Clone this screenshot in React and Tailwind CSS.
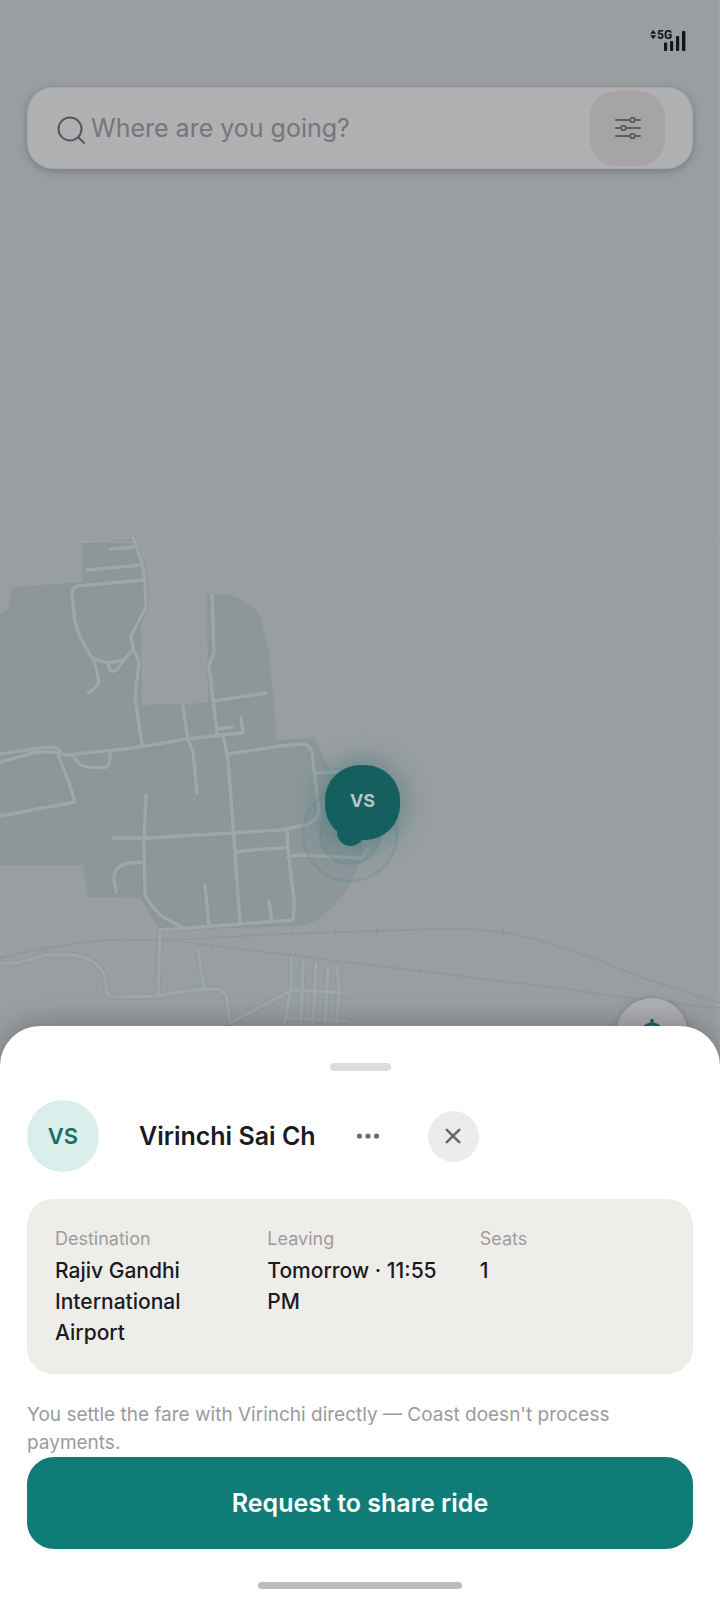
const roads = [
  'M133 537 L142 563 L145 582 L146 607 L131 636 L133 648 L139 662 L135 697 L142 745',
  'M110 549 L134 547',
  'M87 570 L142 565',
  'M144 580 L77 586 Q72 588 72 594 L75 622 Q80 640 92 658 L108 663 L123 660 L133 650',
  'M94 660 L99 682 Q96 689 88 693',
  'M108 663 L110 670 Q113 673 117 669 L124 660',
  'M212 595 L214 653 L209 665 L213 700 L217 734',
  'M213 701 L266 693',
  'M217 729 L232 727',
  'M217 735 L243 733 L241 717',
  'M0 754 L40 748 Q57 745 61 752',
  'M0 762 L33 753 Q50 750 67 755 L133 748 L187 739 L223 735',
  'M58 755 L68 780 L75 802 L0 816',
  'M72 755 L80 765 Q92 769 107 767 Q111 762 110 752',
  'M183 706 L188 740 L193 752 L197 793',
  'M223 735 L228 760 L233 825 L240 923',
  'M228 754 L280 746 L302 744 Q309 744 312 752 L319 811 Q318 820 306 825 L280 830 L233 833 L147 838 L113 838',
  'M146 795 L144 840 L145 893 Q146 900 160 915 Q168 920 182 927',
  'M144 862 L128 863 Q114 866 114 878 L116 892',
  'M236 852 L262 849 L287 848',
  'M287 829 L288 850 L294 900 Q294 914 293 920 L240 924 L160 930 L158 995',
  'M205 885 L209 925',
  'M269 901 L272 922',
  'M0 963 L17 963 Q40 956 48 955 L70 955 Q94 956 104 974 Q107 980 106 990 Q107 996 115 997 L160 996 Q190 989 215 989 Q226 990 227 1000 L230 1023',
  'M198 949 L204 987',
  'M230 1023 L292 990 L345 993',
  'M291 958 L291 989 L283 1028',
  'M303 960 L301 1028',
  'M316 963 L313 1028',
  'M328 965 L325 1028',
  'M337 967 L339 993 L336 1028',
  'M286 1018 L347 1021',
  'M317 773 L362 770',
  'M288 857 L300 855 L362 858 L369 847',
]

const rails = [
  'M0 958 Q60 944 107 940 L170 940 L280 934 L345 932 L435 929 Q490 927 530 938 T600 961 L640 977 L680 990 L720 1003',
  'M170 940 L240 949 L300 956 L345 962 L420 971 L475 978 L560 988 L600 994 L687 1005 L720 1008',
]

const trip = [
  { label: 'Destination', value: 'Rajiv Gandhi International Airport' },
  { label: 'Leaving', value: 'Tomorrow · 11:55 PM' },
  { label: 'Seats', value: '1' },
]

function MapCanvas() {
  return (
    <div className="absolute inset-0 overflow-hidden">
      <svg
        className="w-full h-full"
        viewBox="0 0 720 1600"
        preserveAspectRatio="xMidYMin slice"
        fill="none"
        aria-hidden="true"
      >
        <path
          fill="#8d9799"
          d="M0 613 L8 609 L12 587 L82 582 L82 543 L133 539 L142 563 L147 582 L148 607 L141 625 L142 705 L208 703 L207 595 L228 594 Q245 600 258 612 Q268 640 270 660 L277 740 L315 737 Q322 760 345 790 Q368 820 361 857 Q354 888 325 914 Q312 925 300 926 L160 930 L140 898 L87 897 L83 865 L0 865 Z"
        />
        <path stroke="#a0a6a8" strokeWidth="1" d="M0 542 H720 M719 0 V1600" />
        {rails.map((d) => (
          <g key={d}>
            <path d={d} stroke="#8f9799" strokeWidth="1.5" />
            <path d={d} stroke="#8f9799" strokeWidth="6" strokeDasharray="1.5 40.5" />
          </g>
        ))}
        <g strokeLinecap="round" strokeLinejoin="round">
          {roads.map((d) => (
            <path key={d} d={d} stroke="#8b9698" strokeWidth="6" strokeOpacity="0.5" />
          ))}
          {roads.map((d) => (
            <path key={d} d={d} stroke="#9da6a8" strokeWidth="3.4" />
          ))}
        </g>
        <g stroke="#668b8e" strokeOpacity="0.3" strokeWidth="3" fill="#4d8285">
          <circle cx="350" cy="834" r="47" fillOpacity="0.04" />
          <circle cx="350" cy="834" r="30" fillOpacity="0.12" />
        </g>
      </svg>

      {/* Rider pin */}
      <button
        type="button"
        className="absolute left-[325px] top-[765px] w-[75px] h-[75px] rounded-[35px] bg-[#155f5e] text-[#b7c6c7] text-[18px] leading-6 font-bold flex items-center justify-center pb-1 shadow-[0_0_28px_4px_rgba(21,95,94,0.4)]"
      >
        VS
        <span className="absolute left-3 -bottom-1.5 w-[27px] h-[27px] rounded-full bg-[#155f5e]" />
      </button>
    </div>
  )
}

function StatusBar() {
  return (
    <div className="flex justify-end pt-7 pr-[34px]">
      <svg className="w-9 h-6" viewBox="0 0 36 24" fill="#11171a" role="img" aria-label="5G signal">
        <path d="M3.2 2 L6.2 5.8 H0.2 Z M3.2 11 L6.2 7.2 H0.2 Z" />
        <text x="7" y="11" fontSize="12" fontWeight="800" fontFamily="Roboto, sans-serif">5G</text>
        <rect x="14" y="14.5" width="3.2" height="8.5" rx="0.8" />
        <rect x="20" y="13" width="3.2" height="10" rx="0.8" />
        <rect x="26" y="8" width="3.2" height="15" rx="0.8" />
        <rect x="32" y="3" width="3.4" height="20" rx="0.8" />
      </svg>
    </div>
  )
}

function SearchBar() {
  return (
    <div className="mx-[27px] mt-[35px] h-[82px] px-[27px] flex items-center rounded-[26px] border border-[#a8a8ab] bg-[#b0afb2] shadow-[0_2px_8px_rgba(60,70,75,0.4)]">
      <svg className="w-8 h-8 shrink-0" viewBox="0 0 32 32" fill="none" stroke="#56585c" strokeWidth="2" strokeLinecap="round" aria-hidden="true">
        <circle cx="15" cy="17" r="11.5" />
        <path d="M23.5 25.5 L29 31" />
      </svg>
      <input
        type="text"
        aria-label="Where are you going?"
        placeholder="Where are you going?"
        className="flex-1 min-w-0 pl-1 bg-transparent text-[25px] leading-8 text-[#333] placeholder:text-[#76767a] outline-none"
      />
      <button
        type="button"
        aria-label="Filters"
        className="w-[75px] h-[75px] shrink-0 rounded-[26px] bg-[#a7a4a5] flex items-center justify-center"
      >
        <svg className="w-[26px] h-6" viewBox="0 0 26 24" fill="none" stroke="#5c5b5e" strokeWidth="1.8" strokeLinecap="round" aria-hidden="true">
          <path d="M1 4 H15 M20 4 H25 M1 12 H6 M11 12 H25 M1 20 H15 M20 20 H25" />
          <circle cx="17.5" cy="4" r="2.3" />
          <circle cx="8.5" cy="12" r="2.3" />
          <circle cx="17.5" cy="20" r="2.3" />
        </svg>
      </button>
    </div>
  )
}

function RideSheet() {
  return (
    <section className="relative bg-white rounded-t-[40px] px-[27px] pb-[11px] shadow-[0_-4px_24px_rgba(50,58,62,0.35)]">
      <div className="mx-auto mt-[37px] w-[61px] h-2 rounded-full bg-[#dddcda]" />

      <div className="mt-[29px] flex items-center">
        <div className="w-[72px] h-[72px] rounded-full bg-[#daeeeb] text-[#176e69] text-[22px] leading-8 font-semibold flex items-center justify-center">
          VS
        </div>
        <h1 className="ml-10 text-[25px] leading-8 font-semibold text-[#1b1b1f]">Virinchi Sai Ch</h1>
        <button type="button" aria-label="More options" className="ml-[27px] w-[51px] h-[51px] flex items-center justify-center">
          <svg className="w-6 h-6" viewBox="0 0 24 24" fill="#6b6b6d" aria-hidden="true">
            <circle cx="3.5" cy="12" r="2.6" />
            <circle cx="12" cy="12" r="2.6" />
            <circle cx="20.5" cy="12" r="2.6" />
          </svg>
        </button>
        <button
          type="button"
          aria-label="Close"
          className="ml-[34px] w-[51px] h-[51px] rounded-full bg-[#eeecea] flex items-center justify-center"
        >
          <svg className="w-4 h-4" viewBox="0 0 16 16" fill="none" stroke="#68686a" strokeWidth="2.6" strokeLinecap="round" aria-hidden="true">
            <path d="M1.8 1.8 L14.2 14.2 M14.2 1.8 L1.8 14.2" />
          </svg>
        </button>
      </div>

      <dl className="mt-[27px] grid grid-cols-3 gap-[27px] rounded-[26px] bg-[#eeedea] px-7 pt-7 pb-[26px]">
        {trip.map((item) => (
          <div key={item.label}>
            <dt className="text-[18px] leading-6 text-[#9d9c9e]">{item.label}</dt>
            <dd className="mt-1 text-[21px] leading-[31px] font-medium text-[#1b1b1f]">{item.value}</dd>
          </div>
        ))}
      </dl>

      <p className="mt-[27px] text-[19px] leading-7 text-[#9b9b9e]">
        You settle the fare with Virinchi directly — Coast doesn't process payments.
      </p>

      <button
        type="button"
        className="w-full h-[92px] rounded-[27px] bg-[#107c78] text-white text-[25px] leading-8 font-semibold"
      >
        Request to share ride
      </button>

      <div className="mx-auto mt-[33px] w-[204px] h-[7px] rounded-full bg-[#bcbcbc]" />
    </section>
  )
}

export default function App() {
  return (
    <main className="relative min-h-screen flex flex-col bg-[#999fa1] font-['Inter',sans-serif]">
      <MapCanvas />
      <div className="relative">
        <StatusBar />
        <SearchBar />
      </div>
      <div className="flex-1 min-h-40 flex items-end justify-end pr-8 pointer-events-none">
        <button
          type="button"
          aria-label="My location"
          className="relative w-[72px] h-[72px] -mb-[44px] rounded-full bg-[#b0afb2] flex items-center justify-center shadow-[0_1px_6px_rgba(60,70,75,0.4)] pointer-events-auto"
        >
          <svg className="w-8 h-8" viewBox="0 0 32 32" fill="none" stroke="#155f5e" strokeWidth="3" aria-hidden="true">
            <circle cx="16" cy="17" r="11" />
            <path d="M16 1 V7 M16 27 V32 M0 17 H6 M26 17 H32" />
            <circle cx="16" cy="17" r="4" fill="#155f5e" />
          </svg>
        </button>
      </div>
      <RideSheet />
    </main>
  )
}
